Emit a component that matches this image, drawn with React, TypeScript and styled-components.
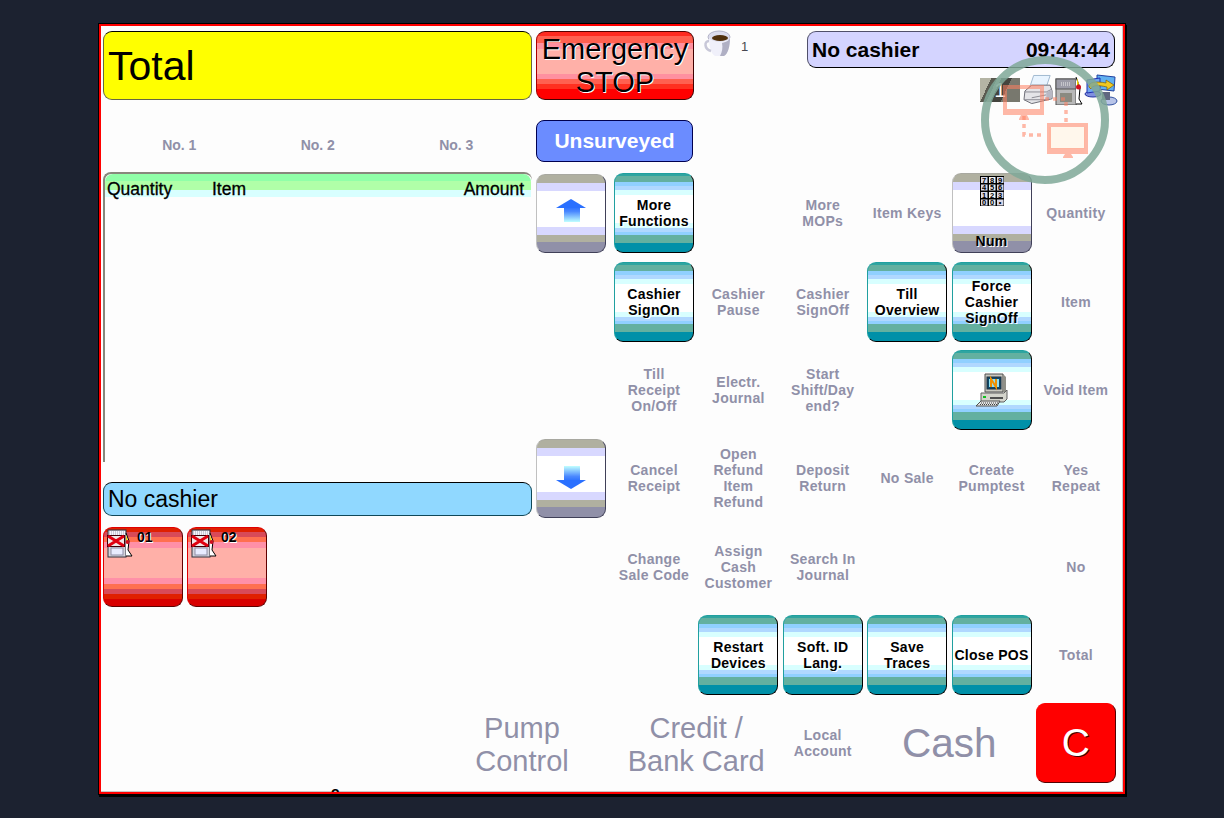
import React from 'react'
import styled, { createGlobalStyle } from 'styled-components'

const FONT = '"Liberation Sans", Arial, sans-serif'
const MUTED = '#9090a8'

// hard-edged colour bands, the way the old POS skin paints its buttons
const bands = (list: [string, number][]): string => {
  let at = 0
  const stops = list.map(([colour, size]) => {
    const part = `${colour} ${at}px ${at + size}px`
    at += size
    return part
  })
  return `linear-gradient(to bottom, ${stops.join(', ')})`
}

const TEAL = bands([
  ['#2fa5a0', 2], ['#63b0a0', 6], ['#90d0ff', 4], ['#b0d8ff', 4], ['#d8ffff', 5], ['#ffffff', 28],
  ['#d8ffff', 5], ['#b0d8ff', 4], ['#90d0ff', 3], ['#63b0a0', 8], ['#0090a8', 11],
])
const GREY = bands([
  ['#b0b0a0', 8], ['#d8d8ff', 8], ['#ffffff', 36], ['#d8d8ff', 8], ['#b0b0a0', 7], ['#9090a8', 13],
])
const ALARM = bands([
  ['#ff2a20', 4], ['#ff6050', 7], ['#ff90a0', 6], ['#ffb0a8', 25], ['#ff90a0', 5], ['#ff6050', 5],
  ['#ff3020', 5], ['#ff0000', 12],
])
const PUMP = bands([
  ['#e02000', 4], ['#d84a58', 5], ['#ff7050', 5], ['#ff90a8', 6], ['#ffb0a8', 30], ['#ff90a8', 6],
  ['#ff7050', 5], ['#d84a58', 5], ['#e02000', 5], ['#d80000', 9],
])

const GlobalStyle = createGlobalStyle`
  html, body {
    margin: 0;
    height: 100%;
    background: #1c2230;
  }
`

const Frame = styled.div`
  position: relative;
  box-sizing: border-box;
  width: 1026px;
  height: 770px;
  margin: 24px 0 0 99px;
  padding: 5px 0 0 2px;
  border: 2px solid #ff0000;
  background: #fdfdfd;
  box-shadow: 0 0 0 1px #000, 1px 2px 0 1px #000, inset -1px -1px 0 #c8c8c8;
  overflow: hidden;
  font-family: ${FONT};
`

const Main = styled.div`
  display: flex;
  align-items: flex-start;
  height: 664.4px;
`

const LeftPane = styled.div`
  display: flex;
  flex-direction: column;
  width: 429px;
  margin-right: 4px;
`

const TotalBar = styled.div`
  box-sizing: border-box;
  height: 69px;
  padding: 2px 0 0 4px;
  display: flex;
  align-items: center;
  background: #ffff00;
  border: 1px solid #666644;
  border-top-color: #000;
  border-radius: 9px;
  font-size: 41px;
  color: #000;
`

const PositionRow = styled.div`
  display: grid;
  grid-template-columns: repeat(3, 138.5px);
  height: 72px;
  padding-left: 7px;
  align-items: end;
`

const PositionLabel = styled.div`
  height: 36px;
  text-align: center;
  font-size: 14px;
  font-weight: 700;
  line-height: 18px;
  color: ${MUTED};
`

const Receipt = styled.div`
  box-sizing: border-box;
  height: 290px;
  border-top: 2px solid #88887c;
  border-left: 2px solid #88887c;
  border-top-left-radius: 8px;
  border-top-right-radius: 8px;
`

const ReceiptHeader = styled.div`
  display: grid;
  grid-template-columns: 105px 1fr auto;
  align-items: center;
  height: 23px;
  width: 426px;
  padding: 5px 7px 0 2px;
  box-sizing: border-box;
  background: ${bands([['#90ffa8', 7], ['#b0ffa8', 9], ['#d8ffff', 7]])};
  border-top-right-radius: 8px;
  border-top-left-radius: 8px;
  font-size: 17.5px;
  -webkit-text-stroke: 0.3px #000;
  color: #000;
`

const MessageBar = styled.div`
  box-sizing: border-box;
  height: 34px;
  margin-top: 20px;
  padding-left: 4px;
  display: flex;
  align-items: center;
  background: #90d8ff;
  border: 1px solid #104858;
  border-top-color: #000;
  border-radius: 9px;
  font-size: 23px;
  color: #000;
`

const PumpRow = styled.div`
  display: flex;
  gap: 4px;
  margin-top: 11px;
`

const PumpButton = styled.div`
  position: relative;
  box-sizing: border-box;
  width: 80px;
  height: 80px;
  background: ${PUMP};
  border: 1px solid;
  border-color: #e00000 #600000 #600000 #e00000;
  border-radius: 9px;
`

const PumpIconSlot = styled.div`
  position: absolute;
  left: 3px;
  top: 1px;
`

const PumpNumber = styled.span`
  position: absolute;
  left: 33px;
  top: 1px;
  font-size: 14px;
  font-weight: 700;
  line-height: 16px;
  color: #000;
  text-shadow: 1px 1px 0 #fff;
`

const CentrePane = styled.div`
  width: 582px;
`

const Header = styled.div`
  display: flex;
  height: 142.4px;
`

const CommandColumn = styled.div`
  display: flex;
  flex-direction: column;
  width: 158px;
`

const EmergencyButton = styled.div`
  box-sizing: border-box;
  height: 69px;
  padding-top: 1px;
  text-align: center;
  background: ${ALARM};
  border: 1px solid;
  border-color: #500 #400000 #400000 #a00;
  border-radius: 9px;
  font-size: 29px;
  line-height: 33px;
  color: #000;
  text-shadow: 1px 1px 0 #fff;
`

const SurveyButton = styled.div`
  box-sizing: border-box;
  width: 157px;
  height: 42px;
  margin-top: 20px;
  display: flex;
  align-items: center;
  justify-content: center;
  background: #6b8cff;
  border: 1px solid #000050;
  border-radius: 8px;
  font-size: 21px;
  font-weight: 700;
  color: #fff;
`

const CupTray = styled.div`
  display: flex;
  align-items: flex-start;
  width: 103px;
  margin-left: 10px;
  margin-top: -1px;
  font-size: 13px;
  color: #484850;
`

const CupCount = styled.span`
  margin: 9px 0 0 9px;
`

const StatusColumn = styled.div`
  display: flex;
  flex-direction: column;
  width: 311px;
`

const StatusBar = styled.div`
  box-sizing: border-box;
  width: 308px;
  height: 37px;
  padding: 0 4px;
  display: flex;
  align-items: center;
  justify-content: space-between;
  background: #d4d4ff;
  border: 1px solid;
  border-color: #50506a #000 #000 #50506a;
  border-radius: 9px;
  font-size: 21px;
  font-weight: 700;
  color: #000;
`

const IconTray = styled.div`
  display: flex;
  align-items: flex-start;
  justify-content: flex-end;
  margin-top: 6px;
`

const SessionBox = styled.div`
  box-sizing: border-box;
  width: 40px;
  height: 24px;
  margin: 4px 3px 0 0;
  display: flex;
  align-items: center;
  justify-content: center;
  background: linear-gradient(115deg, #b4b4a4 0 22%, #5a5a50 22% 34%, #a8a898 34% 42%, #44443e 42% 62%, #78786e 62% 100%);
  font-size: 21px;
  color: #fff;
`

const KeyArea = styled.div`
  display: flex;
  gap: 8px;
`

const ArrowColumn = styled.div`
  display: flex;
  flex-direction: column;
  justify-content: space-between;
  width: 70px;
  height: 345px;
  padding-top: 1px;
  box-sizing: border-box;
`

const ArrowButton = styled.div<{ $lift: number }>`
  box-sizing: border-box;
  height: 79px;
  padding-bottom: ${(props) => props.$lift}px;
  display: flex;
  align-items: center;
  justify-content: center;
  background: ${GREY};
  border: 1px solid;
  border-color: #a8a8a0 #404058 #404058 #c0c0c0;
  border-radius: 9px;
`

const KeyGrid = styled.div`
  display: grid;
  grid-template-columns: repeat(6, 80px);
  grid-auto-rows: 80px;
  column-gap: 4.4px;
  row-gap: 8.3px;
`

const Key = styled.div`
  box-sizing: border-box;
  display: flex;
  flex-direction: column;
  align-items: center;
  justify-content: center;
  text-align: center;
  background: ${TEAL};
  border: 1px solid;
  border-color: #20a0a0 #000 #000 #20a0a0;
  border-radius: 9px;
  font-size: 14px;
  font-weight: 700;
  line-height: 16px;
  letter-spacing: 0.3px;
  color: #000;
  text-shadow: 1px 1px 0 #fff;
`

const NumKey = styled(Key)`
  justify-content: space-between;
  padding: 2px 0 3px;
  background: ${GREY};
  border-color: #a8a8a0 #404058 #404058 #c0c0c0;
`

const KeyLabel = styled.div`
  display: flex;
  align-items: center;
  justify-content: center;
  text-align: center;
  font-size: 14px;
  font-weight: 700;
  line-height: 16px;
  letter-spacing: 0.3px;
  color: ${MUTED};
`

const BottomBar = styled.div`
  display: flex;
  margin: 8px 0 0 334px;
  height: 80px;
`

const PumpControl = styled.div`
  width: 170px;
  margin-right: 7px;
  padding-top: 3px;
  display: flex;
  align-items: center;
  justify-content: center;
  text-align: center;
  font-size: 29px;
  line-height: 33px;
  color: ${MUTED};
`

const WideLabel = styled.div<{ $size: number; $drop: number }>`
  grid-column: span 2;
  padding-top: ${(props) => props.$drop}px;
  display: flex;
  align-items: center;
  justify-content: center;
  text-align: center;
  font-size: ${(props) => props.$size}px;
  line-height: 33px;
  color: ${MUTED};
`

const ClearKey = styled.div`
  box-sizing: border-box;
  display: flex;
  align-items: center;
  justify-content: center;
  background: #ff0000;
  border: 1px solid;
  border-color: #ff0000 #500 #500 #ff0000;
  border-radius: 9px;
  font-size: 39px;
  color: #fff;
  text-shadow: 1px 1px 0 #400;
`

const Overlay = styled.svg`
  position: absolute;
  left: 880px;
  top: 30px;
  pointer-events: none;
`

const ClippedGlyph = styled.span`
  position: absolute;
  left: 230px;
  top: 758px;
  font-size: 14px;
  font-weight: 700;
  line-height: 16px;
  color: #000;
`

const CupIcon = () => (
  <svg width="28" height="28" viewBox="0 0 28 28">
    <ellipse cx="15" cy="7" rx="11" ry="6" fill="#dcdcec" stroke="#b4b4c8" />
    <path d="M5 8 C5 16 7 24 11 26 L20 26 C24 24 26 16 26 8 C22 13 9 13 5 8Z" fill="#f0f0fa" />
    <path d="M18 13 C23 12 25 10 26 8 C26 16 24 24 20 26 L16 26 C18 22 19 18 18 13Z" fill="#b0b0c4" />
    <ellipse cx="16" cy="8" rx="8" ry="3" fill="#50300c" />
    <path d="M5 11 C0 11 0 19 7 21" fill="none" stroke="#c8c8d8" strokeWidth="2.5" />
  </svg>
)

const PrinterIcon = () => (
  <svg width="32" height="33" viewBox="0 0 33 33">
    <path d="M11 1 L28 1 L24 13 L7 13Z" fill="#e8f4ff" stroke="#9fb8d0" />
    <path d="M2 17 L9 11 L28 11 L30 17 L30 25 L9 30 L1 26Z" fill="#e4e4e8" stroke="#6a6a74" />
    <path d="M2 18 L24 18 L30 15 M9 24 L24 21 M1 26 L24 26 L30 23" fill="none" stroke="#8a8a94" />
    <path d="M24 18 L24 26 L30 24 L30 16Z" fill="#b8b8c4" />
  </svg>
)

const FuelIcon = () => (
  <svg width="29" height="31" viewBox="0 0 29 31">
    <rect x="1" y="5" width="20" height="26" fill="#b8b8b8" stroke="#555" />
    <rect x="1" y="5" width="20" height="10" fill="#9c9ca8" stroke="#555" />
    <path d="M6 9 h10 M6 11 h10" stroke="#eee" strokeDasharray="1 1" />
    <rect x="5" y="19" width="12" height="9" fill="#8a8a80" />
    <path d="M21 3 L25 14 L24 25 L27 30 L21 30" fill="#fff" stroke="#000" />
    <path d="M22 4 L24 10 L22 12Z" fill="#f0d000" />
    <circle cx="23.5" cy="13" r="2.5" fill="#d01020" />
  </svg>
)

const NetworkIcon = () => (
  <svg width="34" height="32" viewBox="0 0 34 32">
    <ellipse cx="25" cy="27" rx="8" ry="4" fill="#b8c4e8" stroke="#3050a0" />
    <ellipse cx="9" cy="20" rx="8" ry="3" fill="#8090e0" stroke="#2030a0" />
    <path d="M13 1 L31 3 L30 17 L13 15Z" fill="#60b0f0" stroke="#2040a0" />
    <path d="M3 6 L16 4 L16 17 L3 19Z" fill="#70a8f0" stroke="#2030b0" />
    <path d="M5 13 C4 8 12 7 22 9 L22 6 L30 11 L23 16 L23 13 C14 11 8 11 7 15Z" fill="#f0c820" stroke="#806000" strokeWidth="0.7" />
    <rect x="18" y="18" width="8" height="8" fill="#606880" />
  </svg>
)

const PumpIcon = () => (
  <svg width="26" height="29" viewBox="0 0 26 29">
    <rect x="1" y="1" width="18" height="27" fill="#d4d4dc" stroke="#30303c" />
    <rect x="2" y="2" width="16" height="5" fill="#f4f4fc" />
    <path d="M2 3 h16 M2 5 h16" stroke="#a0a0b0" strokeDasharray="1 1" />
    <rect x="4" y="19" width="12" height="7" fill="#e8ecff" stroke="#9090a8" />
    <path d="M19 4 L22 12 L21 21 L25 27 L19 27" fill="#fff" stroke="#000" />
    <path d="M19 6 L21 12 L19 13Z" fill="#f0d000" />
    <circle cx="20.5" cy="13" r="2" fill="#d01020" />
    <rect x="0.5" y="6.5" width="17" height="11" fill="#f0e8e8" stroke="#400008" />
    <path d="M1 7 L17 17 M17 7 L1 17" stroke="#e00010" strokeWidth="3" />
  </svg>
)

const KEYPAD = ['7', '8', '9', '4', '5', '6', '1', '2', '3', '0', '0', '•']

const KeypadIcon = () => (
  <svg width="24" height="30" viewBox="0 0 24 30">
    <rect width="24" height="30" fill="#000" />
    {KEYPAD.map((digit, i) => (
      <g key={i}>
        <rect x={(i % 3) * 8 + 1} y={Math.floor(i / 3) * 7.5 + 1} width="6.5" height="6" fill={i % 3 === 1 ? '#f4f4f4' : '#d8d8e8'} />
        <text
          x={(i % 3) * 8 + 4.2}
          y={Math.floor(i / 3) * 7.5 + 6.6}
          textAnchor="middle"
          fontSize="7.5"
          fontWeight="700"
          fontFamily={FONT}
          fill="#000"
          style={{ textShadow: 'none' }}
        >
          {digit}
        </text>
      </g>
    ))}
  </svg>
)

const TerminalIcon = () => (
  <svg width="32" height="34" viewBox="0 0 32 34">
    <path d="M9 1 L27 1 L27 19 L9 19Z" fill="#c8c8c0" stroke="#505050" />
    <path d="M27 1 L30 4 L30 19 L27 19Z" fill="#909088" />
    <rect x="11" y="4" width="14" height="12" fill="#104868" stroke="#203040" />
    <rect x="13" y="6" width="10" height="8" fill="#90e0f0" />
    <path d="M15 14 L15 6 L20 14 L20 6" fill="none" stroke="#f09000" strokeWidth="2" />
    <path d="M5 20 L28 20 L31 17 L31 26 L28 29 L5 29Z" fill="#d4d4cc" stroke="#606060" />
    <rect x="14" y="24" width="13" height="2" fill="#505050" />
    <rect x="7" y="23" width="3" height="2" fill="#10c020" />
    <path d="M5 28 L24 28 L21 33 L0 33Z" fill="#e4e4e4" stroke="#505050" />
    <path d="M5 30 h17 M4 31.5 h17" stroke="#404040" strokeDasharray="1 1" />
  </svg>
)

const ArrowUp = () => (
  <svg width="30" height="23" viewBox="0 0 30 23">
    <defs>
      <linearGradient id="shaftUp" x1="0" y1="0" x2="0" y2="1">
        <stop offset="0" stopColor="#2a70ff" />
        <stop offset="0.3" stopColor="#4a88ff" />
        <stop offset="1" stopColor="#c0ffff" />
      </linearGradient>
    </defs>
    <rect x="8" y="8" width="16" height="15" fill="url(#shaftUp)" />
    <path d="M15 0 L30 9 L0 9Z" fill="#2a70ff" />
  </svg>
)

const ArrowDown = () => (
  <svg width="30" height="23" viewBox="0 0 30 23">
    <defs>
      <linearGradient id="shaftDown" x1="0" y1="1" x2="0" y2="0">
        <stop offset="0" stopColor="#2a70ff" />
        <stop offset="0.3" stopColor="#4a88ff" />
        <stop offset="1" stopColor="#c0ffff" />
      </linearGradient>
    </defs>
    <rect x="8" y="0" width="16" height="15" fill="url(#shaftDown)" />
    <path d="M15 23 L30 14 L0 14Z" fill="#2a70ff" />
  </svg>
)

const RemoteOverlay = () => (
  <Overlay width="130" height="130" viewBox="0 0 130 130">
    <circle cx="64" cy="64" r="60" fill="none" stroke="#7fa898" strokeOpacity="0.85" strokeWidth="8" />
    <rect x="68" y="71" width="36" height="22" fill="#fff4e4" fillOpacity="0.7" />
    <g fill="none" stroke="#ff8060" strokeOpacity="0.55">
      <rect x="24" y="31" width="37" height="24" strokeWidth="4" />
      <rect x="68" y="69" width="37" height="25" strokeWidth="4" />
      <path d="M43 60 V79 H64" strokeWidth="3.5" strokeDasharray="4 4" />
      <path d="M85 66 V43 H63" strokeWidth="3.5" strokeDasharray="4 4" />
    </g>
    <g fill="#ff8060" fillOpacity="0.55">
      <path d="M22 57 H63 V59 H46 L48 63 V64 H38 V63 L40 59 H22Z" />
      <path d="M66 96 H107 V98 H90 L92 101 V102 H82 V101 L84 98 H66Z" />
    </g>
  </Overlay>
)

type Cell =
  | { kind: 'empty' }
  | { kind: 'label'; text: string[] }
  | { kind: 'key'; text: string[] }
  | { kind: 'num' }
  | { kind: 'terminal' }

const label = (...text: string[]): Cell => ({ kind: 'label', text })
const key = (...text: string[]): Cell => ({ kind: 'key', text })
const empty: Cell = { kind: 'empty' }

const CELLS: Cell[] = [
  key('More', 'Functions'), empty, label('More', 'MOPs'), label('Item Keys'), { kind: 'num' }, label('Quantity'),
  key('Cashier', 'SignOn'), label('Cashier', 'Pause'), label('Cashier', 'SignOff'), key('Till', 'Overview'), key('Force', 'Cashier', 'SignOff'), label('Item'),
  label('Till', 'Receipt', 'On/Off'), label('Electr.', 'Journal'), label('Start', 'Shift/Day', 'end?'), empty, { kind: 'terminal' }, label('Void Item'),
  label('Cancel', 'Receipt'), label('Open', 'Refund', 'Item', 'Refund'), label('Deposit', 'Return'), label('No Sale'), label('Create', 'Pumptest'), label('Yes', 'Repeat'),
  label('Change', 'Sale Code'), label('Assign', 'Cash', 'Customer'), label('Search In', 'Journal'), empty, empty, label('No'),
  empty, key('Restart', 'Devices'), key('Soft. ID', 'Lang.'), key('Save', 'Traces'), key('Close POS'), label('Total'),
]

const Lines: React.FC<{ text: string[] }> = ({ text }) => (
  <span>
    {text.map((line, i) => (
      <React.Fragment key={i}>
        {i > 0 && <br />}
        {line}
      </React.Fragment>
    ))}
  </span>
)

const renderCell = (cell: Cell, i: number) => {
  switch (cell.kind) {
    case 'label':
      return <KeyLabel key={i}><Lines text={cell.text} /></KeyLabel>
    case 'key':
      return <Key key={i}><Lines text={cell.text} /></Key>
    case 'num':
      return <NumKey key={i}><KeypadIcon /><span>Num</span></NumKey>
    case 'terminal':
      return <Key key={i}><TerminalIcon /></Key>
    default:
      return <div key={i} />
  }
}

const App: React.FC = () => (
  <>
    <GlobalStyle />
    <Frame>
      <Main>
        <LeftPane>
          <TotalBar>Total</TotalBar>
          <PositionRow>
            <PositionLabel>No. 1</PositionLabel>
            <PositionLabel>No. 2</PositionLabel>
            <PositionLabel>No. 3</PositionLabel>
          </PositionRow>
          <Receipt>
            <ReceiptHeader>
              <span>Quantity</span>
              <span>Item</span>
              <span>Amount</span>
            </ReceiptHeader>
          </Receipt>
          <MessageBar>No cashier</MessageBar>
          <PumpRow>
            {['01', '02'].map((pump) => (
              <PumpButton key={pump}>
                <PumpIconSlot><PumpIcon /></PumpIconSlot>
                <PumpNumber>{pump}</PumpNumber>
              </PumpButton>
            ))}
          </PumpRow>
        </LeftPane>
        <CentrePane>
          <Header>
            <CommandColumn>
              <EmergencyButton>Emergency<br />STOP</EmergencyButton>
              <SurveyButton>Unsurveyed</SurveyButton>
            </CommandColumn>
            <CupTray>
              <CupIcon />
              <CupCount>1</CupCount>
            </CupTray>
            <StatusColumn>
              <StatusBar>
                <span>No cashier</span>
                <span>09:44:44</span>
              </StatusBar>
              <IconTray>
                <SessionBox>1</SessionBox>
                <PrinterIcon />
                <FuelIcon />
                <NetworkIcon />
              </IconTray>
            </StatusColumn>
          </Header>
          <KeyArea>
            <ArrowColumn>
              <ArrowButton $lift={6}><ArrowUp /></ArrowButton>
              <ArrowButton $lift={2}><ArrowDown /></ArrowButton>
            </ArrowColumn>
            <KeyGrid>{CELLS.map(renderCell)}</KeyGrid>
          </KeyArea>
        </CentrePane>
      </Main>
      <BottomBar>
        <PumpControl>Pump<br />Control</PumpControl>
        <KeyGrid>
          <WideLabel $size={29} $drop={3}>Credit /<br />Bank Card</WideLabel>
          <KeyLabel>Local<br />Account</KeyLabel>
          <WideLabel $size={40.5} $drop={0}>Cash</WideLabel>
          <ClearKey>C</ClearKey>
        </KeyGrid>
      </BottomBar>
      <ClippedGlyph>o</ClippedGlyph>
      <RemoteOverlay />
    </Frame>
  </>
)

export default App
